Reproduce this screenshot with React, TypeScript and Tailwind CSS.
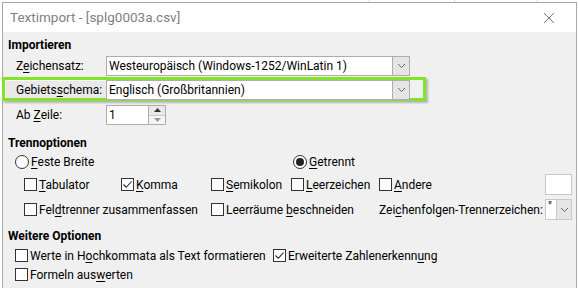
import React from "react"

const font = { fontFamily: 'Roboto, "Noto Sans", sans-serif' }

function U({ children }: { children: React.ReactNode }) {
  return <span className="underline underline-offset-2 decoration-1">{children}</span>
}

function Box({ checked }: { checked?: boolean }) {
  return (
    <span className="w-[13px] h-[13px] border border-[#333] bg-white flex items-center justify-center shrink-0">
      {checked && (
        <svg width="11" height="11" viewBox="0 0 11 11">
          <path d="M1.5 5.5 L4.3 8.3 L9.5 2.5" stroke="#222" strokeWidth="1.1" fill="none" />
        </svg>
      )}
    </span>
  )
}

function Radio({ checked }: { checked?: boolean }) {
  return (
    <span className="w-[14px] h-[14px] rounded-full border border-[#333] bg-white flex items-center justify-center shrink-0">
      {checked && <span className="w-[8px] h-[8px] rounded-full bg-[#222]" />}
    </span>
  )
}

function Check({ checked, children, w }: { checked?: boolean; children: React.ReactNode; w: string }) {
  return (
    <div className={`flex items-center gap-[2px] whitespace-nowrap ${w}`}>
      <Box checked={checked} />
      <span>{children}</span>
    </div>
  )
}

function Chevron() {
  return (
    <svg width="9" height="6" viewBox="0 0 9 6">
      <path d="M1 1 L4.5 4.5 L8 1" stroke="#666" strokeWidth="1" fill="none" />
    </svg>
  )
}

function Select({ value }: { value: string }) {
  return (
    <div className="w-[304px] h-[20px] bg-white border border-[#adadad] flex">
      <div className="flex-1 pl-[2px] leading-[18px] whitespace-nowrap">{value}</div>
      <div className="w-[17px] border-l border-[#adadad] bg-[#e5e5e5] flex items-center justify-center">
        <Chevron />
      </div>
    </div>
  )
}

export default function App() {
  return (
    <div className="w-[578px] h-[288px] overflow-hidden bg-white relative text-[12px] text-black" style={font}>
      <div className="absolute inset-0 flex pointer-events-none">
        <div className="w-[370px] border-r border-[#dcdcdc]" />
        <div className="w-[85px] border-r border-[#dcdcdc]" />
        <div className="w-[83px] border-r border-[#dcdcdc]" />
      </div>
      <div className="relative ml-[2px] mt-[2px] w-[575px] h-[300px] border border-[#a8a8a8] bg-[#f0f0f0]">
        <div className="h-[29px] bg-white flex items-center justify-between pl-[7px] pr-[21px]">
          <span className="text-[13.5px] text-[#808080]">Textimport - [splg0003a.csv]</span>
          <svg width="12" height="12" viewBox="0 0 12 12">
            <path d="M1 1 L11 11 M11 1 L1 11" stroke="#777" strokeWidth="1" />
          </svg>
        </div>

        <div className="pl-[5px] pt-[4px]">
          <div className="h-[18px] font-bold leading-[18px]">Importieren</div>

          <div className="mt-[2px] flex items-center h-[20px]">
            <span className="w-[98px] pl-[8px] shrink-0">
              Z<U>e</U>ichensatz:
            </span>
            <Select value="Westeuropäisch (Windows-1252/WinLatin 1)" />
          </div>

          <div className="relative mt-[4px] flex items-center h-[20px]">
            <div className="absolute left-[-6px] top-[-3px] w-[424px] h-[24px] border-[3px] border-[#82e42a] shadow-[2px_2px_2px_rgba(0,0,0,0.25)]" />
            <div className="absolute left-[-3px] top-0 w-[101px] h-[18px] bg-[#e9e9e9] border-t border-l border-[#fafafa]" />
            <span className="relative w-[98px] pl-[8px] shrink-0">
              Gebiets<U>s</U>chema:
            </span>
            <div className="relative">
              <Select value="Englisch (Großbritannien)" />
            </div>
          </div>

          <div className="mt-[5px] flex items-center h-[20px]">
            <span className="w-[98px] pl-[8px] shrink-0">
              Ab <U>Z</U>eile:
            </span>
            <div className="w-[60px] h-[20px] bg-white border border-[#adadad] flex">
              <div className="flex-1 pl-[2px] leading-[18px]">1</div>
              <div className="w-[17px] border-l border-[#adadad] flex flex-col">
                <div className="flex-1 bg-[#e8e8e8] border-b border-[#c8c8c8] flex items-center justify-center">
                  <svg width="7" height="4" viewBox="0 0 7 4"><path d="M0 4 L3.5 0 L7 4Z" fill="#333" /></svg>
                </div>
                <div className="flex-1 bg-[#f4f4f4] flex items-center justify-center">
                  <svg width="7" height="4" viewBox="0 0 7 4"><path d="M0 0 L3.5 4 L7 0Z" fill="#999" /></svg>
                </div>
              </div>
            </div>
          </div>

          <div className="mt-[9px] h-[18px] font-bold leading-[18px]">Trennoptionen</div>

          <div className="mt-[1px] flex items-center h-[18px] pl-[7px]">
            <div className="flex items-center gap-[2px] w-[278px]">
              <Radio />
              <span><U>F</U>este Breite</span>
            </div>
            <div className="flex items-center gap-[2px]">
              <Radio checked />
              <span><U>G</U>etrennt</span>
            </div>
          </div>

          <div className="mt-[3px] flex items-center h-[21px] pl-[16px]">
            <Check w="w-[97px]"><U>T</U>abulator</Check>
            <Check w="w-[90px]" checked><U>K</U>omma</Check>
            <Check w="w-[80px]"><U>S</U>emikolon</Check>
            <Check w="w-[88px]"><U>L</U>eerzeichen</Check>
            <Check w="w-[166px]"><U>A</U>ndere</Check>
            <div className="w-[27px] h-[21px] bg-white border border-[#c8c8c8]" />
          </div>

          <div className="mt-[4px] flex items-center h-[21px] pl-[16px]">
            <Check w="w-[187px]">Fel<U>d</U>trenner zusammenfassen</Check>
            <Check w="w-[168px]">Leerräume <U>b</U>eschneiden</Check>
            <span className="w-[166px] whitespace-nowrap">Zei<U>c</U>henfolgen-Trennerzeichen:</span>
            <div className="w-[27px] h-[21px] bg-white border border-[#c8c8c8] flex">
              <div className="w-[10px] pl-[2px] leading-[14px]">"</div>
              <div className="flex-1 bg-[#e5e5e5] border-l border-[#c8c8c8] flex items-center justify-center">
                <Chevron />
              </div>
            </div>
          </div>

          <div className="mt-[7px] h-[18px] font-bold leading-[18px]">Weitere Optionen</div>

          <div className="mt-[1px] flex items-center h-[19px] pl-[7px]">
            <Check w="w-[258px]">Werte in H<U>o</U>chkommata als Text formatieren</Check>
            <Check w="w-[200px]" checked>Erweiterte Zahlenerkenn<U>u</U>ng</Check>
          </div>

          <div className="flex items-center h-[19px] pl-[7px]">
            <Check w="w-[200px]">Formeln aus<U>w</U>erten</Check>
          </div>
        </div>
      </div>
    </div>
  )
}
